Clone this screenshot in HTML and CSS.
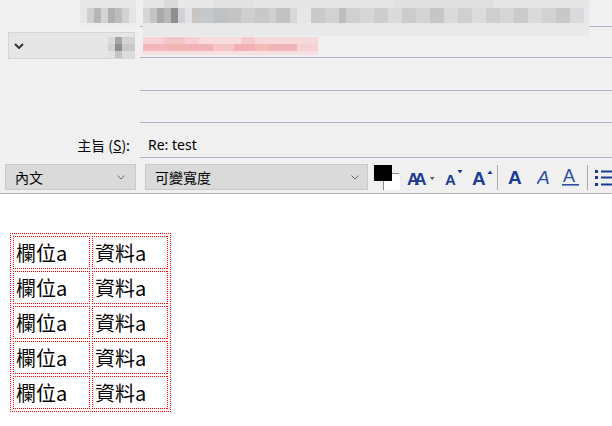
FILE: index.html
```html
<!DOCTYPE html>
<html lang="zh-Hant">
<head>
<meta charset="utf-8">
<title>Re: test</title>
<link rel="stylesheet" href="styles.css">
</head>
<body>
<div class="hdr">
  <div class="fields">
    <div class="lab"></div>
    <div class="fld"></div>
    <div class="lab lab-btn"><div class="fromdd"><svg class="chev" width="10" height="6" viewBox="0 0 10 6"><path d="M1 1 L5 5 L9 1" fill="none" stroke="#333" stroke-width="2"/></svg></div></div>
    <div class="fld"></div>
    <div class="lab"></div>
    <div class="fld"></div>
    <div class="lab"></div>
    <div class="fld"></div>
    <div class="lab lab-subj">主旨 (<u>S</u>):</div>
    <div class="fld fld-subj">Re: test</div>
  </div>
  <div class="toolbar">
    <div class="dd dd1"><span>內文</span><svg width="8" height="5" viewBox="0 0 8 5"><path d="M0.5 0.5 L4 4 L7.5 0.5" fill="none" stroke="#666" stroke-width="1"/></svg></div>
    <div class="dd dd2"><span>可變寬度</span><svg width="8" height="5" viewBox="0 0 8 5"><path d="M0.5 0.5 L4 4 L7.5 0.5" fill="none" stroke="#666" stroke-width="1"/></svg></div>
    <svg class="ic ic-color" width="26" height="26" viewBox="0 0 26 26">
      <rect x="9" y="9" width="17" height="17" fill="#fff"/>
      <path d="M9.5 26 V17 M18 9.5 H25" stroke="#8a8a8a" stroke-width="1"/>
      <rect x="0" y="1" width="18" height="16" fill="#000"/>
    </svg>
    <svg class="ic ic-grow" width="28" height="26" viewBox="0 0 28 26">
      <text x="0" y="21" class="gA gAA" font-size="17">AA</text>
      <path d="M23 13 H27.5 L25.25 16 Z" fill="#555"/>
    </svg>
    <svg class="ic ic-down" width="18" height="26" viewBox="0 0 18 26">
      <text x="0" y="21" class="gA" font-size="15">A</text>
      <path d="M12.5 6 H17.5 L15 9.5 Z" fill="#1c3c94"/>
    </svg>
    <svg class="ic ic-up" width="21" height="26" viewBox="0 0 21 26">
      <text x="0" y="21" class="gA" font-size="19">A</text>
      <path d="M15.5 10 H20.5 L18 6.5 Z" fill="#1c3c94"/>
    </svg>
    <div class="sep"></div>
    <svg class="ic ic-b" width="16" height="26" viewBox="0 0 16 26">
      <text x="0" y="20" class="gA" font-size="19">A</text>
    </svg>
    <svg class="ic ic-i" width="14" height="26" viewBox="0 0 14 26">
      <text x="0" y="20" class="gI" font-size="19">A</text>
    </svg>
    <svg class="ic ic-u" width="17" height="26" viewBox="0 0 17 26">
      <text x="1" y="18" class="gU" font-size="18">A</text>
      <rect x="0" y="20" width="17" height="1.6" fill="#2d4fa6"/>
    </svg>
    <div class="sep sep2"></div>
    <svg class="ic ic-list" width="17" height="26" viewBox="0 0 17 26">
      <rect x="0" y="6" width="3" height="3" fill="#1c3c94"/>
      <rect x="0" y="12" width="3" height="3" fill="#1c3c94"/>
      <rect x="0" y="19" width="3" height="3" fill="#1c3c94"/>
      <rect x="6" y="6.5" width="11" height="2" fill="#1c3c94"/>
      <rect x="6" y="12.5" width="11" height="2" fill="#1c3c94"/>
      <rect x="6" y="19.5" width="11" height="2" fill="#1c3c94"/>
    </svg>
  </div>
  <div class="mosaic mz-a"></div>
  <div class="mosaic mz-b"></div>
  <div class="mosaic mz-c"></div>
  <div class="mosaic mz-d"></div>
</div>
<div class="content">
  <table class="tbl">
    <tr><td class="c1">欄位a</td><td class="c2">資料a</td></tr>
    <tr><td class="c1">欄位a</td><td class="c2">資料a</td></tr>
    <tr><td class="c1">欄位a</td><td class="c2">資料a</td></tr>
    <tr><td class="c1">欄位a</td><td class="c2">資料a</td></tr>
    <tr><td class="c1">欄位a</td><td class="c2">資料a</td></tr>
  </table>
</div>
</body>
</html>
```
FILE: styles.css
```css
html, body { margin: 0; padding: 0; background: #fff; }
body { font-family: "Noto Sans", "Noto Sans CJK TC", sans-serif; color: #000; overflow: hidden; }

.hdr {
  position: relative;
  background: #f0f0f0;
  height: 193px;
  border-bottom: 1px solid #b4b4b4;
}
.fields {
  display: grid;
  grid-template-columns: 140px 1fr;
  grid-template-rows: 27px 31px 33px 32px 35px;
}
.fld { border-bottom: 1px solid #aab4cc; }
.lab-btn { display: flex; align-items: flex-end; }
.fromdd {
  margin-left: 8px;
  width: 125px;
  height: 25px;
  margin-bottom: -1px;
  background: #e6e6e6;
  border: 1px solid #d6d6d6;
  display: flex;
  align-items: center;
}
.chev { margin-left: 5px; }
.lab-subj {
  font-family: "Noto Sans CJK TC", sans-serif;
  font-size: 14px;
  line-height: 20px;
  text-align: right;
  padding-right: 10px;
  padding-top: 12px;
  color: #000;
}
.fld-subj {
  font-size: 14px;
  line-height: 20px;
  padding-left: 8px;
  padding-top: 12px;
  color: #000;
}

.toolbar {
  display: flex;
  align-items: flex-start;
  padding-top: 6px;
}
.dd {
  box-sizing: border-box;
  height: 26px;
  background: #dadada;
  border: 1px solid #c9c9c9;
  display: flex;
  align-items: center;
  justify-content: space-between;
  font-family: "Noto Sans CJK TC", sans-serif;
  font-size: 14px;
  line-height: 20px;
  padding: 0 10px 0 9px;
}
.dd1 { margin-left: 5px; width: 131px; }
.dd2 { margin-left: 9px; width: 223px; padding-right: 8px; }
.ic { display: block; flex: none; }
.ic-color { margin-left: 6px; }
.ic-grow { margin-left: 7px; }
.ic-down { margin-left: 10px; }
.ic-up { margin-left: 9px; }
.sep { width: 1px; height: 25px; background: #a8a8a8; margin-left: 4px; margin-top: 1px; }
.ic-b { margin-left: 10px; }
.ic-i { margin-left: 13px; }
.ic-u { margin-left: 11px; }
.sep2 { margin-left: 8px; }
.ic-list { margin-left: 7px; }
.gA { font-family: "Liberation Sans", sans-serif; font-weight: bold; fill: #1c3c94; }
.gAA { letter-spacing: -5px; }
.gI { font-family: "Liberation Sans", sans-serif; font-style: italic; fill: #2d4fa6; }
.gU { font-family: "Liberation Sans", sans-serif; fill: #2d4fa6; }

/* redaction mosaics laid over the address fields */
.mosaic { position: absolute; }
.mz-a {
  left: 80px; top: 0; width: 56px; height: 30px;
  background:
    linear-gradient(to right, #e6e6e6 0 7px, #cfcfcf 7px 14px, #b6b6b6 14px 21px, #d4d4d4 21px 28px, #b0b0b0 28px 35px, #bdbdbd 35px 42px, #d2d2d2 42px 49px, #e4e4e4 49px) 0 8px / 100% 15px no-repeat,
    linear-gradient(#e8e8e8 0 8px, #e9e9e9 8px 23px, #ededed 23px);
}
.mz-b {
  left: 143px; top: 0; width: 446px; height: 36px;
  background:
    linear-gradient(to right, #d6d6d6 0 7px, #c4c4c4 7px 14px, #a8a8a8 14px 21px, #b9b9b9 21px 28px, #8f8f8f 28px 35px, #cfd2d6 35px 42px, #e3e3e3 42px 49px, #c8c6c2 49px 56px, #c5c9cc 56px 70px, #bfc2c4 70px 84px, #c4c4c4 84px 98px, #cfcfcf 98px 112px, #c8c8c8 112px 126px, #d0d0d0 126px 133px, #c2c2c2 133px 147px, #d8d8d8 147px 154px, #e6e6e6 154px 168px, #cacaca 168px 182px, #d2d2d2 182px 196px, #bebebe 196px 203px, #d0d0d0 203px 217px, #d6d6d6 217px 231px, #cdcdcd 231px 245px, #dadada 245px 259px, #cccccc 259px 273px, #d4d4d4 273px 287px, #c6c6c6 287px 301px, #dadada 301px 315px, #d0d0d0 315px 329px, #dcdcdc 329px 343px, #cfcfcf 343px 357px, #d6d6d6 357px 371px, #cbcbcb 371px 385px, #dadada 385px 399px, #d2d2d2 399px 413px, #c8c8c8 413px 427px, #d8dade 427px 441px, #e8e8e8 441px) 0 8px / 100% 15px no-repeat,
    linear-gradient(to right, #e6e6e6 0 21px, #dadada 21px 35px, #e8e8e8 35px 70px, #e2e2e2 70px 112px, #e6e6e6 112px 250px, #e0e0e0 250px 350px, #e6e6e6 350px) 0 0 / 100% 8px no-repeat,
    linear-gradient(#e8e8e8 0 30px, #e8e9eb 30px);
}
.mz-c {
  left: 108px; top: 37px; width: 27px; height: 21px;
  background:
    linear-gradient(to right, #dadada 0 7px, #a6a6a6 7px 14px, #d4d4d4 14px) 0 0 / 100% 7px no-repeat,
    linear-gradient(to right, #d0d0d0 0 7px, #8e8e8e 7px 14px, #c8c8c8 14px) 0 7px / 100% 7px no-repeat,
    linear-gradient(to right, #e2e2e2 0 7px, #c4c4c4 7px 14px, #dcdcdc 14px) 0 14px / 100% 7px no-repeat;
}
.mz-d {
  left: 143px; top: 37px; width: 175px; height: 18px;
  background:
    linear-gradient(to right, #f4d2d5 0 21px, #f2c6c9 21px 42px, #f4d0d2 42px 56px, #f6dcdc 56px 98px, #f3c9cc 98px 112px, #f5d8da 112px 175px) 0 0 / 100% 7px no-repeat,
    linear-gradient(to right, #f2b6bb 0 28px, #f0b7b2 28px 42px, #f1b2b8 42px 70px, #f4c4c8 70px 91px, #f0b0b6 91px 112px, #f5bcb3 112px 126px, #f1b4ba 126px 154px, #f6d0d2 154px 175px) 0 7px / 100% 7px no-repeat,
    linear-gradient(#f6e0e1, #f6e0e1) 0 14px / 100% 4px no-repeat;
}

/* 1px dotted red borders drawn as crisp pixel dots */
.dotbox {
}
.content { padding: 39px 0 0 10px; }
.tbl {
  border-collapse: separate;
  border-spacing: 2px;
  border: 1px solid transparent;
  font-family: "Noto Sans CJK TC", sans-serif;
  font-size: 20px;
}
.tbl, .tbl td {
  background-color: #fff;
  background-image:
    repeating-linear-gradient(to right, #f00 0 1px, transparent 1px 2px),
    repeating-linear-gradient(to right, #f00 0 1px, transparent 1px 2px),
    repeating-linear-gradient(to bottom, #f00 0 1px, transparent 1px 2px),
    repeating-linear-gradient(to bottom, #f00 0 1px, transparent 1px 2px);
  background-size: 100% 1px, 100% 1px, 1px 100%, 1px 100%;
  background-position: left top, left bottom, left top, right top;
  background-repeat: no-repeat;
  background-origin: border-box;
}
.tbl td {
  border: 1px solid transparent;
  height: 33px;
  padding: 0 0 0 2px;
  line-height: 31px;
  box-sizing: border-box;
  vertical-align: middle;
  white-space: nowrap;
}
.c1 { width: 77px; }
.c2 { width: 76px; }
```
